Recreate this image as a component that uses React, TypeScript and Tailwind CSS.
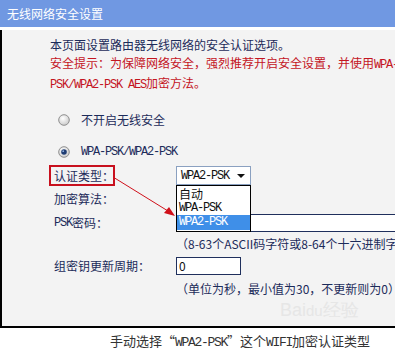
const mono = "font-['Liberation_Mono',monospace] text-[12px] tracking-[-1.2px]";

const Radio = ({ checked }: { checked?: boolean }) => (
  <svg width="12" height="12" viewBox="0 0 12 12" className="shrink-0">
    <defs>
      <radialGradient id={checked ? "rg1" : "rg0"} cx="0.4" cy="0.35" r="0.7">
        <stop offset="0" stopColor="#ffffff" />
        <stop offset="1" stopColor="#c9c9c9" />
      </radialGradient>
    </defs>
    <circle cx="6" cy="6" r="5.3" fill={`url(#${checked ? "rg1" : "rg0"})`} stroke="#8f8f8f" strokeWidth="1" />
    {checked && <circle cx="6" cy="6" r="2.8" fill="#1e3c72" />}
    {checked && <circle cx="5.2" cy="5.2" r="0.9" fill="#8fb0e0" />}
  </svg>
);

export default function App() {
  return (
    <div className="relative w-[395px] h-[353px] overflow-hidden bg-white font-['Noto_Sans_CJK_SC',sans-serif]">
      {/* title bar */}
      <div className="h-[27px] bg-[#7098e2] flex items-center pl-[7px] text-white text-[12px]">
        无线网络安全设置
      </div>

      {/* panel */}
      <div className="mt-[3px] h-[298px] border-l-2 border-b-2 border-black bg-[#f3f3f3] pl-[48px] pt-[6px] text-[12px] leading-[18px] text-[#1c2b5a]">
        <div className="whitespace-nowrap">本页面设置路由器无线网络的安全认证选项。</div>
        <div className="whitespace-nowrap text-[#c4151f]">
          安全提示：为保障网络安全，强烈推荐开启安全设置，并使用<span className={mono}>WPA-</span>
        </div>
        <div className="whitespace-nowrap text-[#c4151f]">
          <span className={mono}>PSK/WPA2-PSK AES</span>加密方法。
        </div>

        <div className="mt-[17px] flex items-center h-[18px] pl-[8px] gap-[11px]">
          <Radio />
          <span>不开启无线安全</span>
        </div>
        <div className="mt-[14px] flex items-center h-[18px] pl-[8px] gap-[11px]">
          <Radio checked />
          <span className={mono}>WPA-PSK/WPA2-PSK</span>
        </div>

        <div className="mt-[5px] grid grid-cols-[126px_1fr]">
          {/* 认证类型 */}
          <div className="h-[20px] flex items-center pl-[4px]">
            <span className="relative">
              认证类型：
              <span className="absolute -left-[5px] -top-[2px] w-[66px] h-[21px] border-2 border-[#c8101e]" />
            </span>
          </div>
          <div className="h-[20px] relative z-10">
            <div className="w-[75px] h-[19px] bg-white border border-[#8aa0c0] flex items-center pl-[4px] pr-[5px] justify-between">
              <span className={`${mono} text-[#111]`}>WPA2-PSK</span>
              <svg width="8" height="4" viewBox="0 0 8 4">
                <path d="M0 0 H8 L4 4 Z" fill="#111" />
              </svg>
            </div>
            <div className="absolute left-0 top-[19px] w-[75px] bg-white border border-black text-[#111] py-[1px]">
              <div className="pl-[2px] text-[12px] h-[14px] leading-[14px]">自动</div>
              <div className={`pl-[2px] h-[14px] leading-[14px] ${mono}`}>WPA-PSK</div>
              <div className={`pl-[2px] h-[15px] leading-[15px] bg-[#3f8fe8] text-white ${mono}`}>WPA2-PSK</div>
            </div>
          </div>

          {/* 加密算法 */}
          <div className="mt-[4px] h-[18px] flex items-center pl-[4px]">加密算法：</div>
          <div className="mt-[4px] h-[18px]" />

          {/* PSK密码 */}
          <div className="mt-[6px] h-[18px] flex items-center pl-[4px]">
            <span className={mono}>PSK</span>密码：
          </div>
          <div className="mt-[6px] h-[18px] flex items-center">
            <div className="w-[240px] h-[18px] bg-white border border-[#1f2f5c]" />
          </div>

          <div className="h-[24px]" />
          <div className="h-[24px] flex items-center whitespace-nowrap">（8-63个ASCII码字符或8-64个十六进制字</div>

          {/* 组密钥更新周期 */}
          <div className="h-[20px] flex items-center pl-[4px]">组密钥更新周期：</div>
          <div className="h-[20px] flex items-center">
            <div className="w-[65px] h-[18px] bg-white border border-[#1f2f5c] pl-[2px] leading-[16px] text-[#111]">0</div>
          </div>

          <div className="h-[26px]" />
          <div className="h-[26px] flex items-center whitespace-nowrap">（单位为秒，最小值为30，不更新则为0）</div>
        </div>
      </div>

      {/* caption */}
      <div className="pl-[110px] pt-[4px] text-[13px] leading-[18px] text-[#333] whitespace-nowrap">
        手动选择“<span className="font-['Liberation_Mono',monospace] text-[13px] tracking-[-1.3px]">WPA2-PSK</span>”这个
        <span className="font-['Liberation_Mono',monospace] text-[13px] tracking-[-1.3px]">WIFI</span>加密认证类型
      </div>

      {/* arrow pointing to the chosen option */}
      <svg className="absolute inset-0 pointer-events-none z-20" width="395" height="353">
        <line x1="113" y1="177" x2="168" y2="211" stroke="#d0101a" strokeWidth="1" />
        <path d="M175 216 L164 213 L169 207 Z" fill="#d0101a" />
      </svg>

      {/* faint watermark */}
      <div className="absolute left-[280px] top-[300px] text-[18px] leading-[20px] text-[#e6e6e6] font-['Liberation_Sans',sans-serif] pointer-events-none">
        Bai<span className="text-[15px]">du</span>经验
      </div>
    </div>
  );
}
